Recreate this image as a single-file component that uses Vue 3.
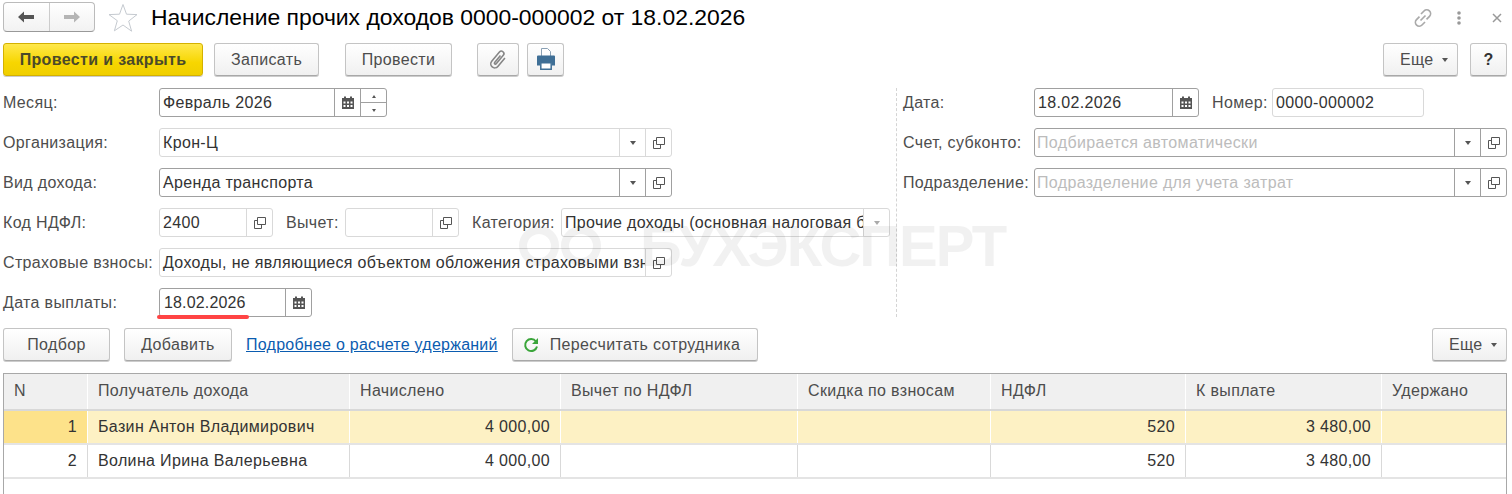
<script setup>
const columns = [
  { title: 'N', width: 83 },
  { title: 'Получатель дохода', width: 262 },
  { title: 'Начислено', width: 211 },
  { title: 'Вычет по НДФЛ', width: 237 },
  { title: 'Скидка по взносам', width: 193 },
  { title: 'НДФЛ', width: 195 },
  { title: 'К выплате', width: 196 },
  { title: 'Удержано', width: 125 }
]
const rows = [
  { n: 1, name: 'Базин Антон Владимирович', sum: '4 000,00', tax: '520', pay: '3 480,00', active: true },
  { n: 2, name: 'Волина Ирина Валерьевна', sum: '4 000,00', tax: '520', pay: '3 480,00', active: false }
]
</script>

<template>
  <div class="page">
    <header class="titlebar">
      <div class="nav">
        <button class="nav-btn">
          <svg width="18" height="12" viewBox="0 0 18 12"><path d="M7 0.500 1 6l6 5.500V8h10V4H7z" fill="#555"/></svg>
        </button>
        <button class="nav-btn">
          <svg width="18" height="12" viewBox="0 0 18 12"><path d="M11 0.500 17 6l-6 5.500V8H1V4h10z" fill="#b5b5b5"/></svg>
        </button>
      </div>
      <svg class="star" width="30" height="30" viewBox="0 0 30 30"><path d="M15 1.500l3.500 9.700 10.500.4-8.300 6.500 2.900 10.100L15 22l-8.600 5.800 2.900-10.100L1 11.600l10.500-.4z" fill="none" stroke="#c5cad0"/></svg>
      <h1 class="title">Начисление прочих доходов 0000-000002 от 18.02.2026</h1>
      <div class="window-tools">
        <svg class="chain" width="20" height="20" viewBox="0 0 20 20" fill="none" stroke="#aaa" stroke-width="1.700"><path d="M8 6l3-3a3.800 3.800 0 0 1 5.500 5.300l-3 3M12 14l-3 3a3.800 3.800 0 0 1-5.500-5.300l3-3M7.500 12.500l5-5"/></svg>
        <svg class="dots" width="6" height="14" viewBox="0 0 6 14" fill="#999"><circle cx="3" cy="2" r="1.800"/><circle cx="3" cy="7" r="1.800"/><circle cx="3" cy="12" r="1.800"/></svg>
        <svg class="close" width="10" height="10" viewBox="0 0 10 10" stroke="#999" stroke-width="1.500"><path d="M1 1l8 8M9 1l-8 8"/></svg>
      </div>
    </header>

    <div class="toolbar">
      <button class="btn primary">Провести и закрыть</button>
      <button class="btn save">Записать</button>
      <button class="btn post">Провести</button>
      <button class="btn icon clip">
        <svg width="22" height="24" viewBox="0 0 22 24" fill="none" stroke="#868686" stroke-width="1.600"><path transform="rotate(40 11 12)" d="M15 6v11a4 4 0 0 1-8 0V5a2.500 2.500 0 0 1 5 0v11a1 1 0 0 1-2 0V7"/></svg>
      </button>
      <button class="btn icon print">
        <svg width="18" height="23" viewBox="0 0 18 23"><path d="M4.500 0.500h6l3 3v6h-9z" fill="#fff" stroke="#8aa0b4"/><path d="M0 8.500q0-1 1-1h16q1 0 1 1v9h-3v-3H3v3H0z" fill="#3f6f96"/><path d="M3.800 14.800h10.400v6.400H3.800z" fill="#fff" stroke="#3f6f96" stroke-width="1.500"/></svg>
      </button>
      <span class="spacer"></span>
      <button class="btn more">Еще <i class="caret"></i></button>
      <button class="btn help">?</button>
    </div>

    <div class="form">
      <div class="col left">
        <div class="row">
          <label class="label">Месяц:</label>
          <div class="field w-month">
            <span class="value">Февраль 2026</span>
            <span class="cell">
              <svg class="cal" width="14" height="14" viewBox="0 0 14 14"><use href="#cal-icon"/></svg>
            </span>
            <span class="cell spin"><i class="up"></i><i class="down"></i></span>
          </div>
        </div>
        <div class="row">
          <label class="label">Организация:</label>
          <div class="field w-full light">
            <span class="value">Крон-Ц</span>
            <span class="cell"><i class="caret"></i></span>
            <span class="cell"><svg width="14" height="14" viewBox="0 0 14 14"><use href="#open-icon"/></svg></span>
          </div>
        </div>
        <div class="row">
          <label class="label">Вид дохода:</label>
          <div class="field w-full">
            <span class="value">Аренда транспорта</span>
            <span class="cell"><i class="caret"></i></span>
            <span class="cell"><svg width="14" height="14" viewBox="0 0 14 14"><use href="#open-icon"/></svg></span>
          </div>
        </div>
        <div class="row">
          <label class="label">Код НДФЛ:</label>
          <div class="field w-code light">
            <span class="value">2400</span>
            <span class="cell"><svg width="14" height="14" viewBox="0 0 14 14"><use href="#open-icon"/></svg></span>
          </div>
          <label class="label inline deduct">Вычет:</label>
          <div class="field w-code light">
            <span class="value"></span>
            <span class="cell"><svg width="14" height="14" viewBox="0 0 14 14"><use href="#open-icon"/></svg></span>
          </div>
          <label class="label inline category">Категория:</label>
          <div class="field w-cat light">
            <span class="value">Прочие доходы (основная налоговая база)</span>
            <span class="cell"><i class="caret pale"></i></span>
          </div>
        </div>
        <div class="row">
          <label class="label">Страховые взносы:</label>
          <div class="field w-full light">
            <span class="value">Доходы, не являющиеся объектом обложения страховыми взносами</span>
            <span class="cell"><svg width="14" height="14" viewBox="0 0 14 14"><use href="#open-icon"/></svg></span>
          </div>
        </div>
        <div class="row">
          <label class="label">Дата выплаты:</label>
          <div class="field w-paydate">
            <span class="value underlined">18.02.2026</span>
            <span class="cell"><svg width="14" height="14" viewBox="0 0 14 14"><use href="#cal-icon"/></svg></span>
          </div>
        </div>
      </div>

      <div class="col right">
        <div class="row">
          <label class="label r">Дата:</label>
          <div class="field w-date">
            <span class="value">18.02.2026</span>
            <span class="cell"><svg width="14" height="14" viewBox="0 0 14 14"><use href="#cal-icon"/></svg></span>
          </div>
          <label class="label inline number">Номер:</label>
          <div class="field w-num light"><span class="value">0000-000002</span></div>
        </div>
        <div class="row">
          <label class="label r">Счет, субконто:</label>
          <div class="field w-wide">
            <span class="value ph">Подбирается автоматически</span>
            <span class="cell"><i class="caret"></i></span>
            <span class="cell"><svg width="14" height="14" viewBox="0 0 14 14"><use href="#open-icon"/></svg></span>
          </div>
        </div>
        <div class="row">
          <label class="label r">Подразделение:</label>
          <div class="field w-wide">
            <span class="value ph">Подразделение для учета затрат</span>
            <span class="cell"><i class="caret"></i></span>
            <span class="cell"><svg width="14" height="14" viewBox="0 0 14 14"><use href="#open-icon"/></svg></span>
          </div>
        </div>
      </div>

      <div class="watermark">
        <svg width="82" height="40" viewBox="0 0 82 40" fill="none" stroke="#000" stroke-width="8"><circle cx="20" cy="20" r="16"/><circle cx="62" cy="20" r="16"/></svg>
        <span>БУХЭКСПЕРТ</span>
      </div>
    </div>

    <div class="toolbar table-bar">
      <button class="btn pick">Подбор</button>
      <button class="btn add">Добавить</button>
      <a class="link">Подробнее о расчете удержаний</a>
      <button class="btn recalc">
        <svg width="16" height="16" viewBox="0 0 16 16" fill="none"><path d="M13 4.500A6 6 0 1 0 14 9.500" stroke="#3aa53a" stroke-width="2"/><path d="M15 1v6H9z" fill="#3aa53a"/></svg>
        Пересчитать сотрудника
      </button>
      <span class="spacer"></span>
      <button class="btn more low">Еще <i class="caret"></i></button>
    </div>

    <div class="table">
      <div class="thead">
        <div v-for="c in columns" :key="c.title" class="th" :style="{ width: c.width + 'px' }">{{ c.title }}</div>
      </div>
      <div v-for="r in rows" :key="r.n" class="tr" :class="{ active: r.active }">
        <div class="td num n" :style="{ width: columns[0].width + 'px' }">{{ r.n }}</div>
        <div class="td" :style="{ width: columns[1].width + 'px' }">{{ r.name }}</div>
        <div class="td num" :style="{ width: columns[2].width + 'px' }">{{ r.sum }}</div>
        <div class="td" :style="{ width: columns[3].width + 'px' }"></div>
        <div class="td" :style="{ width: columns[4].width + 'px' }"></div>
        <div class="td num" :style="{ width: columns[5].width + 'px' }">{{ r.tax }}</div>
        <div class="td num" :style="{ width: columns[6].width + 'px' }">{{ r.pay }}</div>
        <div class="td" :style="{ width: columns[7].width + 'px' }"></div>
      </div>
    </div>

    <svg class="defs" width="0" height="0">
      <symbol id="cal-icon" viewBox="0 0 14 14">
        <path d="M1 2h12v11H1z" fill="#555"/>
        <path d="M3 0.500h2v3H3zM9 0.500h2v3H9z" fill="#555"/>
        <path d="M2.500 5.500h2v2h-2zM6 5.500h2v2H6zM9.500 5.500h2v2h-2zM2.500 9h2v2h-2zM6 9h2v2H6zM9.500 9h2v2h-2z" fill="#fff"/>
      </symbol>
      <symbol id="open-icon" viewBox="0 0 14 14">
        <path d="M4.500 1.500h8v7h-8z" fill="none" stroke="#555"/>
        <path d="M4.500 4.500h-3v8h7v-4" fill="none" stroke="#555"/>
      </symbol>
    </svg>
  </div>
</template>

<style scoped>
.page {
  position: relative;
  width: 1512px;
  height: 494px;
  overflow: hidden;
  background: #fff;
  font-family: "Liberation Sans", Arial, sans-serif;
  font-size: 16px;
  letter-spacing: 0.35px;
  color: #333;
}

button {
  font-family: inherit;
  font-size: inherit;
  letter-spacing: inherit;
  cursor: default;
}

.titlebar {
  display: flex;
  align-items: center;
  height: 35px;
  padding: 0 0 0 3px;
}

.nav {
  display: flex;
  width: 92px;
  height: 30px;
  margin-top: -1px;
  border: 1px solid #bbb;
  border-bottom-color: #999;
  border-radius: 4px;
  background: linear-gradient(#fff, #f2f2f2);
  box-sizing: border-box;
}

.nav-btn {
  flex: 1;
  display: flex;
  align-items: center;
  justify-content: center;
  padding: 0;
  border: 0;
  background: none;
}

.nav-btn + .nav-btn {
  border-left: 1px solid #ccc;
}

.star {
  margin-left: 13px;
}

.title {
  margin: 0 0 0 13px;
  font-size: 22.9px;
  font-weight: 400;
  letter-spacing: 0;
  color: #000;
  white-space: nowrap;
}

.window-tools {
  display: flex;
  align-items: center;
  margin-left: auto;
  padding-right: 10px;
}

.dots { margin-left: 23px; }
.close { margin-left: 30px; }

.toolbar {
  display: flex;
  align-items: flex-start;
  height: 33px;
  margin: 8px 5px 0 3px;
}

.btn {
  display: inline-flex;
  align-items: center;
  justify-content: center;
  height: 33px;
  padding: 0;
  border: 1px solid #c4c4c4;
  border-bottom-color: #a8a8a8;
  border-radius: 3px;
  background: linear-gradient(#fff, #f0f0f0);
  box-shadow: 0 1px 0 #ccc;
  color: #4d4d4d;
  box-sizing: border-box;
  white-space: nowrap;
}

.primary {
  width: 200px;
  border-color: #d4b100;
  background: linear-gradient(#ffe84c, #f7d600 60%, #f0cf00);
  font-weight: 700;
  color: #4a4a2a;
}

.save { width: 105px; margin-left: 11px; }
.post { width: 107px; margin-left: 26px; }
.icon { width: 42px; margin-left: 25px; }
.print { width: 37px; margin-left: 8px; }
.more { width: 75px; justify-content: flex-start; padding-left: 16px; gap: 8px; }
.help { width: 37px; margin-left: 12px; font-weight: 700; color: #333; }

.spacer { flex: 1; }

.caret {
  display: inline-block;
  width: 0;
  height: 0;
  border-left: 3.500px solid transparent;
  border-right: 3.500px solid transparent;
  border-top: 4px solid #555;
}

.caret.pale { border-top-color: #aaa; }

.form {
  position: relative;
  display: flex;
  margin-top: 12px;
  height: 229px;
}

.col {
  display: flex;
  flex-direction: column;
  gap: 11px;
}

.left {
  width: 896px;
  padding-left: 3px;
  box-sizing: border-box;
}

.right {
  flex: 1;
  padding-left: 6px;
  border-left: 1px dashed #d4d4d4;
}

.row {
  display: flex;
  align-items: center;
  height: 29px;
}

.label {
  width: 156px;
  flex: none;
  color: #4d4d4d;
  white-space: nowrap;
}

.label.r { width: 131px; }
.deduct { width: 59px; margin-left: 13px; }
.category { width: 89px; margin-left: 13px; }
.number { width: 60px; margin-left: 13px; }

.field {
  display: flex;
  flex: none;
  height: 29px;
  border: 1px solid #a0a0a0;
  border-radius: 3px;
  background: #fff;
  box-sizing: border-box;
}

.field.light { border-color: #d9d9d9; }

.value {
  flex: 1;
  min-width: 0;
  padding: 0 3px;
  overflow: hidden;
  white-space: nowrap;
  line-height: 27px;
  color: #333;
}

.ph { color: #bcbcbc; padding-left: 2px; }

.cell {
  display: flex;
  flex: none;
  align-items: center;
  justify-content: center;
  width: 26px;
  border-left: 1px solid #a0a0a0;
  box-sizing: border-box;
}

.light .cell { border-left-color: #d9d9d9; }

.spin {
  flex-direction: column;
  justify-content: stretch;
}

.spin i {
  flex: 1;
  width: 100%;
  position: relative;
}

.spin .up { border-bottom: 1px solid #a0a0a0; }

.spin .up::after,
.spin .down::after {
  content: '';
  position: absolute;
  left: 50%;
  top: 50%;
  margin: -1px 0 0 -2px;
  border-left: 2px solid transparent;
  border-right: 2px solid transparent;
}

.spin .up::after { border-bottom: 3px solid #555; }
.spin .down::after { border-top: 3px solid #555; }

.w-month { width: 228px; }
.w-full { width: 513px; }
.w-code { width: 114px; }
.w-cat { width: 329px; }
.w-paydate { width: 153px; }
.w-date { width: 165px; }
.w-num { width: 152px; }
.w-wide { width: 473px; }

.underlined {
  position: relative;
  padding-left: 4px;
  overflow: visible;
  letter-spacing: 0.15px;
}

.underlined::after {
  content: '';
  position: absolute;
  left: -3px;
  width: 92px;
  bottom: -3px;
  height: 4px;
  border-radius: 2px;
  background: #f44;
}

.watermark {
  position: absolute;
  left: 519px;
  top: 130px;
  display: flex;
  align-items: center;
  gap: 39px;
  opacity: 0.05;
  pointer-events: none;
  font-size: 58px;
  font-weight: 700;
  letter-spacing: -2px;
  color: #000;
  line-height: 56px;
}

.table-bar {
  margin-top: 11px;
}

.pick { width: 107px; }
.add { width: 108px; margin-left: 14px; }

.link {
  margin: 8px 0 0 14px;
  color: #0b5cb0;
  text-decoration: underline;
  letter-spacing: 0.25px;
}

.recalc {
  width: 246px;
  margin-left: 14px;
  justify-content: flex-start;
  padding-left: 10px;
  gap: 11px;
}

.low { width: 75px; }

.table {
  margin: 12px 5px 0 3px;
  height: 121px;
  border: 1px solid #a8a8a8;
  border-bottom: 0;
  box-sizing: border-box;
}

.thead {
  display: flex;
  height: 35px;
  background: #f0f0f0;
  border-bottom: 2px solid #d8d8d8;
}

.th {
  flex: none;
  padding: 0 10px;
  border-left: 1px solid #fff;
  line-height: 33px;
  color: #4d4d4d;
  box-sizing: border-box;
  white-space: nowrap;
}

.th:first-child { border-left: 0; }

.tr {
  display: flex;
  height: 34px;
  border-bottom: 2px solid #e4e4e4;
  box-sizing: border-box;
}

.tr.active { background: #fdf1c4; }

.td {
  flex: none;
  height: 32px;
  padding: 0 10px;
  border-left: 1px solid #d9d9d9;
  line-height: 31px;
  color: #333;
  white-space: nowrap;
  box-sizing: border-box;
}

.tr.active .td { border-left-color: #fff; }

.td:first-child { border-left: 0; }

.td.num { text-align: right; }

.tr.active .n { background: #fde28a; }

.defs {
  position: absolute;
}
</style>
